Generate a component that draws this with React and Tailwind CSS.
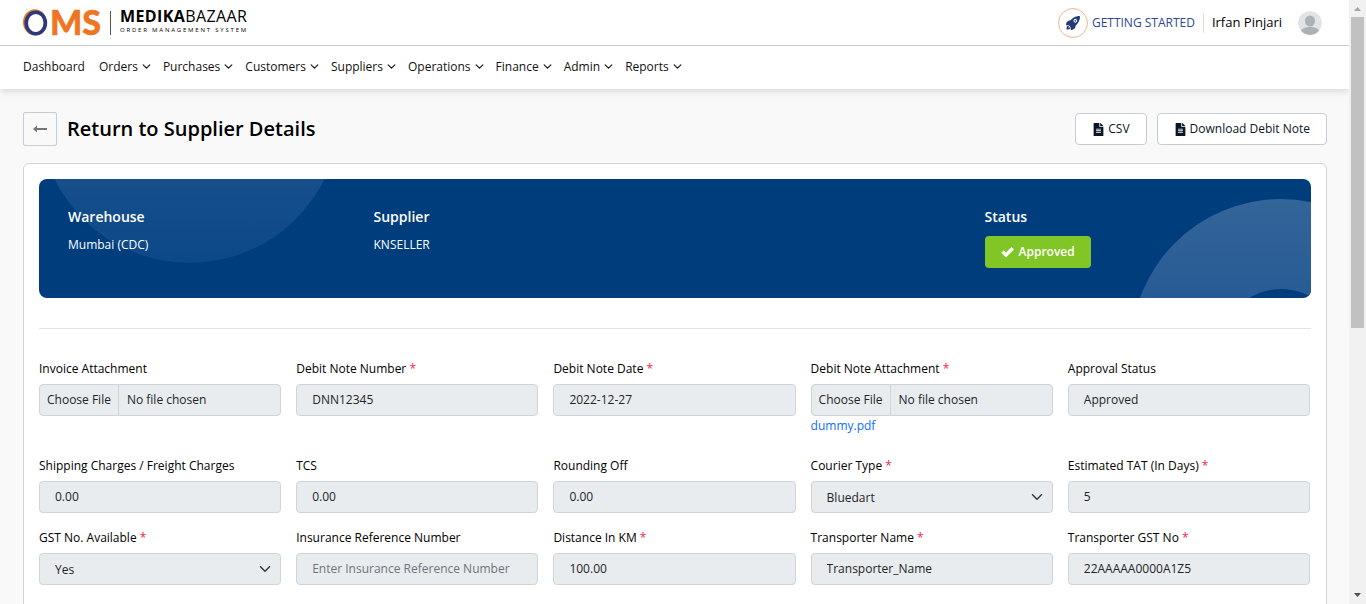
import React from "react";
import { FaFileAlt } from "react-icons/fa";
import { IoRocket } from "react-icons/io5";

const menus = ["Orders", "Purchases", "Customers", "Suppliers", "Operations", "Finance", "Admin", "Reports"];

const fields = [
  { id: "invoice-attachment", label: "Invoice Attachment", kind: "file" },
  { id: "debit-note-number", label: "Debit Note Number", required: true, value: "DNN12345" },
  { id: "debit-note-date", label: "Debit Note Date", required: true, value: "2022-12-27" },
  { id: "debit-note-attachment", label: "Debit Note Attachment", required: true, kind: "file", link: "dummy.pdf" },
  { id: "approval-status", label: "Approval Status", value: "Approved" },
  { id: "shipping", label: "Shipping Charges / Freight Charges", value: "0.00" },
  { id: "tcs", label: "TCS", value: "0.00" },
  { id: "rounding", label: "Rounding Off", value: "0.00" },
  { id: "courier", label: "Courier Type", required: true, kind: "select", value: "Bluedart" },
  { id: "tat", label: "Estimated TAT (In Days)", required: true, value: "5" },
  { id: "gst-available", label: "GST No. Available", required: true, kind: "select", value: "Yes" },
  { id: "insurance", label: "Insurance Reference Number", value: "", placeholder: "Enter Insurance Reference Number" },
  { id: "distance", label: "Distance In KM", required: true, value: "100.00" },
  { id: "transporter", label: "Transporter Name", required: true, value: "Transporter_Name" },
  { id: "transporter-gst", label: "Transporter GST No", required: true, value: "22AAAAA0000A1Z5" },
];

function Chevron({ className }) {
  return (
    <svg viewBox="0 0 16 16" className={className} fill="none" stroke="currentColor" strokeWidth="2" strokeLinecap="round" strokeLinejoin="round" aria-hidden="true">
      <path d="M2 5l6 6 6-6" />
    </svg>
  );
}

function Logo() {
  return (
    <a href="#home" className="flex items-center text-black" aria-label="OMS Medikabazaar">
      <svg width="79" height="43" viewBox="0 -8 79 43" aria-hidden="true">
        <ellipse cx="11.800" cy="13.300" rx="10.300" ry="11.600" fill="none" stroke="#ee7623" strokeWidth="3" />
        <ellipse cx="12.800" cy="14" rx="9.600" ry="10.800" fill="none" stroke="#2b3a80" strokeWidth="3.600" />
        <text x="27" y="25.500" fontFamily="Lato, sans-serif" fontWeight="900" fontSize="34" fill="#ee7623" stroke="#ee7623" strokeWidth="0.500">MS</text>
      </svg>
      <span className="ml-2 h-6 w-px bg-[#555]" />
      <span className="ml-[9px] flex flex-col pb-1">
        <span className="text-base leading-[18px] tracking-wide"><b>MEDIKA</b>BAZAAR</span>
        <span className="pt-px text-[6px] leading-2 tracking-[0.3em]">ORDER MANAGEMENT SYSTEM</span>
      </span>
    </a>
  );
}

function Header() {
  return (
    <header className="bg-white shadow-[0_2px_8px_rgba(0,0,0,0.15)]">
      <div className="flex h-[46px] items-center justify-between border-b border-[#ccc] pl-[23px] pr-[27px]">
        <Logo />
        <div className="flex items-center">
          <a href="#start" className="flex items-center gap-1 text-xs text-[#2f4694]">
            <span className="flex size-[30px] items-center justify-center rounded-full border border-[#f5b58f] text-[#253a76]">
              <IoRocket className="size-4" />
            </span>
            GETTING STARTED
          </a>
          <span className="mx-2 h-5 w-px bg-[#ddd]" />
          <span className="text-[13px] text-black">Irfan Pinjari</span>
          <svg viewBox="0 0 24 24" className="ml-4 size-6 rounded-full" aria-label="Profile">
            <circle cx="12" cy="12" r="12" fill="#e1e3e5" />
            <ellipse cx="12" cy="10" rx="5" ry="5.600" fill="#acb1b5" />
            <path d="M3 20c1-3 5-4 9-4s8 1 9 4c-2 2.600-5.500 4-9 4s-7-1.400-9-4z" fill="#acb1b5" />
          </svg>
        </div>
      </div>
      <nav className="flex h-[43px] items-center gap-3 pb-0.5 pl-[23px] text-xs text-[#111]">
        <a href="#dashboard" className="mr-0.5">Dashboard</a>
        {menus.map((m) => (
          <button key={m} type="button" className="flex items-center gap-1">
            {m}
            <Chevron className="size-[9px]" />
          </button>
        ))}
      </nav>
    </header>
  );
}

function Banner() {
  return (
    <section className="relative h-[119px] overflow-hidden rounded-lg bg-[#003d7d] px-[25px] text-white">
      <svg className="absolute -top-[217px] left-0 h-[301px] w-[301px]" viewBox="0 0 301 301" aria-hidden="true">
        <defs>
          <linearGradient id="disc" x1="0" y1="0" x2="0" y2="1">
            <stop offset="0" stopColor="#fff" stopOpacity="0.140" />
            <stop offset="0.700" stopColor="#bcd0ec" stopOpacity="0.130" />
            <stop offset="1" stopColor="#7aa7ee" stopOpacity="0.100" />
          </linearGradient>
        </defs>
        <circle cx="150.500" cy="150.500" r="150.500" fill="url(#disc)" />
      </svg>
      <svg className="absolute -right-[120px] top-5 size-[300px]" viewBox="0 0 300 300" aria-hidden="true">
        <defs>
          <linearGradient id="ring" x1="0" y1="0" x2="0" y2="1">
            <stop offset="0" stopColor="#336599" />
            <stop offset="0.330" stopColor="#285b95" />
            <stop offset="1" stopColor="#1a4f90" />
          </linearGradient>
        </defs>
        <path fillRule="evenodd" fill="url(#ring)" d="M150 0a150 150 0 1 0 0 300a150 150 0 1 0 0-300zM150 90a60 60 0 1 1 0 120a60 60 0 1 1 0-120z" />
      </svg>
      <div className="relative grid grid-cols-4 pt-7">
        <div className="pl-1">
          <h2 className="text-sm leading-5 font-semibold">Warehouse</h2>
          <p className="mt-2 text-xs leading-5">Mumbai (CDC)</p>
        </div>
        <div className="pl-1">
          <h2 className="text-sm leading-5 font-semibold">Supplier</h2>
          <p className="mt-2 text-xs leading-5">KNSELLER</p>
        </div>
        <div className="col-start-4 pl-1">
          <h2 className="text-sm leading-5 font-semibold">Status</h2>
          <button type="button" className="mt-[9px] flex h-8 items-center gap-[5px] rounded bg-[#82c526] px-4 text-xs font-semibold">
            <svg width="13" height="12" viewBox="0 0 13 12" fill="none" stroke="currentColor" strokeWidth="3.400" aria-hidden="true">
              <path d="M1.500 5.500l3.500 3.500 6.800-6.800" />
            </svg>
            Approved
          </button>
        </div>
      </div>
    </section>
  );
}

const box = "h-8 w-full rounded border border-[#ced4da] bg-[#e9ecef] text-xs text-[#212529]";

function Field({ id, label, required, kind, value, placeholder, link }) {
  return (
    <div>
      <label htmlFor={id} className="mb-1.5 block text-xs leading-[18px] text-black">
        {label}
        {required && <span className="text-[#f5224b]"> *</span>}
      </label>
      {kind === "file" && (
        <input
          id={id}
          type="file"
          disabled
          className={`${box} block leading-[30px] file:mr-2 file:h-[30px] file:border-r file:border-[#ced4da] file:px-[7px] file:text-xs file:text-[#212529]`}
        />
      )}
      {kind === "select" && (
        <div className="grid items-center">
          <select id={id} disabled defaultValue={value} className={`${box} col-start-1 row-start-1 appearance-none px-[15px] pt-0.5 opacity-100`}>
            <option>{value}</option>
          </select>
          <Chevron className="col-start-1 row-start-1 mr-2.5 size-3 justify-self-end text-[#343a40]" />
        </div>
      )}
      {!kind && (
        <input id={id} type="text" disabled defaultValue={value} placeholder={placeholder} className={`${box} block px-[15px] pb-0.5 placeholder:text-[#6c757d]`} />
      )}
      {link && <a href="#dummy" className="mb-[5px] block text-xs leading-5 text-[#0d6efd]">{link}</a>}
    </div>
  );
}

const action = "flex h-8 items-center gap-[3px] rounded border border-[#c5cdd8] bg-white px-4 text-xs text-[#0b1526]";

export default function App() {
  return (
    <div className="flex h-screen overflow-hidden bg-[#f9f9f9] font-['Open_Sans',sans-serif]">
      <div className="min-w-0 flex-1">
        <Header />
        <main className="pt-[23px] pr-[22px] pl-[23px]">
          <div className="flex items-center justify-between">
            <div className="flex items-center gap-2.5">
              <button type="button" aria-label="Back" className="flex size-[34px] items-center justify-center rounded-xs border border-[#c5cdd8] text-[#777]">
                <svg width="14" height="8" viewBox="0 0 14 8" aria-hidden="true">
                  <path d="M0 4l4-3.500v2.500h10v2h-10v2.500z" fill="currentColor" />
                </svg>
              </button>
              <h1 className="text-xl font-semibold text-black">Return to Supplier Details</h1>
            </div>
            <div className="flex gap-2.5">
              <button type="button" className={action}><FaFileAlt className="size-[13px]" />CSV</button>
              <button type="button" className={action}><FaFileAlt className="size-[13px]" />Download Debit Note</button>
            </div>
          </div>
          <div className="mt-[17px] rounded-md border border-[#ced4da] bg-white p-[15px] pb-10">
            <Banner />
            <hr className="mt-[30px] mb-[31px] border-[#e5e5e5]" />
            <form className="grid grid-cols-5 gap-x-[15px] gap-y-4 pr-px">
              {fields.map((f) => <Field key={f.id} {...f} />)}
            </form>
          </div>
        </main>
      </div>
      <div className="flex w-[17px] shrink-0 flex-col items-center justify-between bg-[#f1f1f1]" aria-hidden="true">
        <svg width="17" height="17" viewBox="0 0 17 17"><path d="M5 11l3.500-4 3.500 4z" fill="#a3a3a3" /></svg>
        <div className="mb-auto h-[311px] w-[13px] bg-[#c1c1c1]" />
        <svg width="17" height="17" viewBox="0 0 17 17"><path d="M5 6l3.500 4 3.500-4z" fill="#505050" /></svg>
      </div>
    </div>
  );
}
